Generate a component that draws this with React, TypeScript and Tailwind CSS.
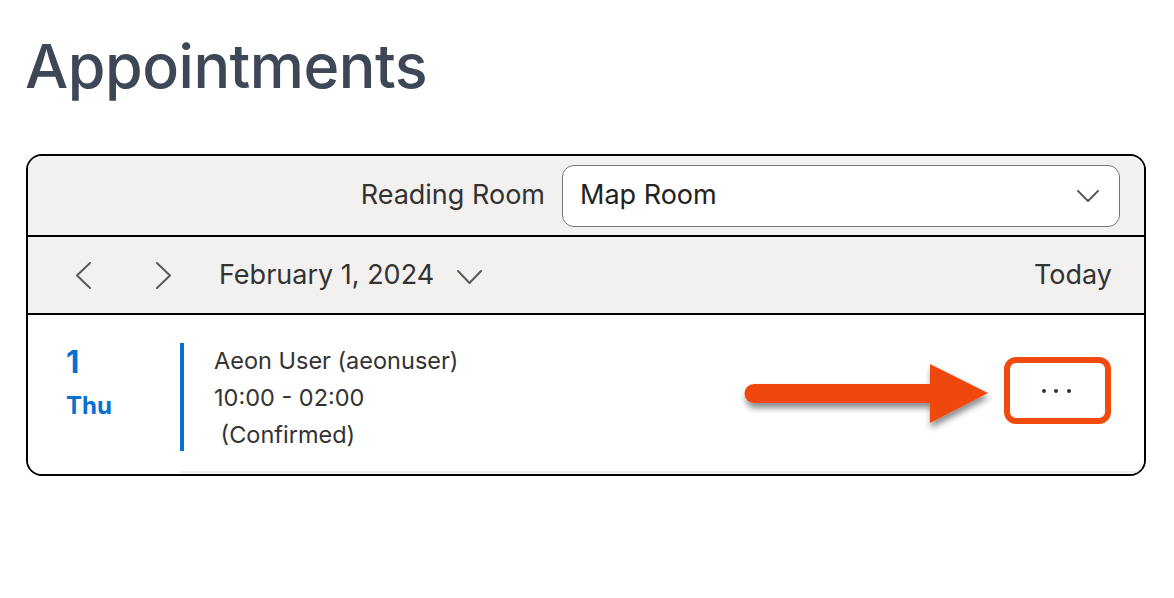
const font = { fontFamily: 'Inter, "Open Sans", sans-serif' };

function Chevron({ dir, w, h }: { dir: 'left' | 'right' | 'down'; w: number; h: number }) {
  const d =
    dir === 'left'
      ? `M${w - 1} 1 L1 ${h / 2} L${w - 1} ${h - 1}`
      : dir === 'right'
      ? `M1 1 L${w - 1} ${h / 2} L1 ${h - 1}`
      : `M1 1 L${w / 2} ${h - 1} L${w - 1} 1`;
  return (
    <svg width={w} height={h} viewBox={`0 0 ${w} ${h}`} className="shrink-0">
      <path d={d} fill="none" stroke="#5a5a5a" strokeWidth="2" strokeLinecap="round" strokeLinejoin="round" />
    </svg>
  );
}

function PointerArrow() {
  // annotation arrow drawn over the row
  return (
    <svg
      className="absolute left-[736px] top-[357px] pointer-events-none"
      width="270"
      height="80"
      viewBox="0 0 270 80"
    >
      <defs>
        <filter id="shadow" x="-20%" y="-40%" width="140%" height="180%">
          <feDropShadow dx="1" dy="5" stdDeviation="3" floodColor="#000" floodOpacity="0.45" />
        </filter>
      </defs>
      <g filter="url(#shadow)">
        <path d="M18 27 L194 27 L194 7 L252 36 L194 66 L194 46 L18 46 A9.5 9.5 0 0 1 18 27 Z" fill="#f0470b" />
      </g>
    </svg>
  );
}

export default function App() {
  return (
    <div className="relative w-[1174px] h-[598px] bg-white pl-[26px] pt-[26px]" style={font}>
      <h1 className="text-[61px] font-medium leading-[80px] text-[#3d4756] tracking-[-0.5px] -ml-[1px]">Appointments</h1>

      <div className="mt-[48px] w-[1120px] border-2 border-black rounded-[16px] overflow-hidden">
        <div className="flex items-center justify-end gap-[17px] h-[81px] pr-[24px] bg-[#f2f1ef] border-b-2 border-black">
          <span className="text-[27px] text-[#333]">Reading Room</span>
          <div className="flex items-center justify-between w-[558px] h-[62px] pl-[17px] pr-[20px] bg-white border-[1.5px] border-[#767676] rounded-[12px]">
            <span className="text-[27px] text-[#222]">Map Room</span>
            <Chevron dir="down" w={22} h={12} />
          </div>
        </div>

        <div className="flex items-center h-[78px] pl-[48px] pr-[32px] bg-[#f2f1ef] border-b-2 border-black">
          <Chevron dir="left" w={15} h={27} />
          <span className="ml-[65px]">
            <Chevron dir="right" w={15} h={27} />
          </span>
          <span className="ml-[48px] text-[27px] text-[#333]">February 1, 2024</span>
          <span className="ml-[23px] mt-[4px]">
            <Chevron dir="down" w={25} h={14} />
          </span>
          <span className="ml-auto text-[27px] text-[#333]">Today</span>
        </div>

        <div className="flex h-[159px] bg-white">
          <div className="flex flex-col w-[152px] pl-[38px] pt-[28px] text-[#0a6fd3] font-bold">
            <span className="text-[31px] leading-[38px]">1</span>
            <span className="text-[24px] leading-[30px] mt-[10px]">Thu</span>
          </div>
          <div className="flex flex-1 pt-[28px] border-b-2 border-[#ececec] mb-[1px]">
            <div className="w-[4px] h-[108px] bg-[#0a6fd3]" />
            <div className="flex flex-col pl-[30px] text-[23.5px] leading-[37px] text-[#333] -mt-[1px]">
              <span>Aeon User (aeonuser)</span>
              <span>10:00 - 02:00</span>
              <span className="whitespace-pre"> (Confirmed)</span>
            </div>
            <div className="ml-auto mr-[33px] mt-[14px]">
              <button className="flex items-center justify-center gap-[8.5px] w-[107px] h-[67px] pr-[3px] border-[6px] border-[#f04a0c] rounded-[12px] bg-white">
                <span className="w-[4px] h-[4px] rounded-full bg-[#333]" />
                <span className="w-[4px] h-[4px] rounded-full bg-[#333]" />
                <span className="w-[4px] h-[4px] rounded-full bg-[#333]" />
              </button>
            </div>
          </div>
        </div>
      </div>

      <PointerArrow />
    </div>
  );
}
